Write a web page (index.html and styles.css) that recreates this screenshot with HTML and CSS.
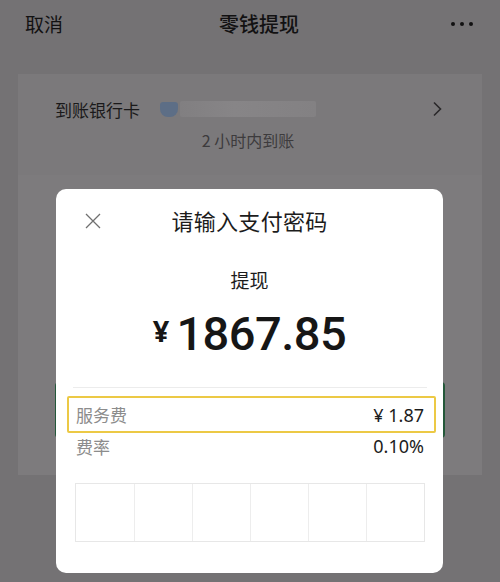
FILE: index.html
```html
<!DOCTYPE html>
<html lang="zh">
<head>
<meta charset="utf-8">
<link rel="stylesheet" href="styles.css">
</head>
<body>
<div class="screen">
  <div class="nav">
    <span class="nav-left">取消</span>
    <span class="nav-title">零钱提现</span>
    <span class="nav-more"><i></i><i></i><i></i></span>
  </div>
  <div class="card bank">
    <div class="bank-row">
      <span class="bank-label">到账银行卡</span>
      <span class="bank-name"><span class="bank-icon"></span><span class="blur"></span></span>
      <svg class="chev" width="11" height="16" viewBox="0 0 11 16"><path d="M2 1.5 L8.5 8 L2 14.5" fill="none" stroke="#2a292a" stroke-width="1.6"/></svg>
    </div>
    <div class="bank-sub">2 小时内到账</div>
  </div>
  <div class="card amount-card">
    <div class="green-btn"></div>
  </div>

  <div class="modal">
    <div class="modal-head">
      <svg class="close" width="16" height="16" viewBox="0 0 16 16"><path d="M1 1 L15 15 M15 1 L1 15" stroke="#707070" stroke-width="1.3" fill="none"/></svg>
      <span class="modal-title">请输入支付密码</span>
    </div>
    <div class="modal-sub">提现</div>
    <div class="modal-amount"><span class="yen">¥</span><span class="num">1867.85</span></div>
    <div class="divider"></div>
    <div class="fee-row highlight"><span class="k">服务费</span><span class="v">¥ 1.87</span></div>
    <div class="fee-row rate"><span class="k">费率</span><span class="v">0.10%</span></div>
    <div class="pwd">
      <div class="cell"></div><div class="cell"></div><div class="cell"></div>
      <div class="cell"></div><div class="cell"></div><div class="cell"></div>
    </div>
  </div>
</div>
</body>
</html>
```

FILE: styles.css
```css
* { box-sizing: border-box; }
html, body { margin: 0; padding: 0; }
body {
  font-family: "Noto Sans CJK SC", "Noto Sans", sans-serif;
  background: #747274;
}
.screen {
  position: relative;
  width: 500px;
  height: 582px;
  overflow: hidden;
  background: #747274;
}
.nav {
  height: 48px;
  padding: 0 27px 0 25px;
  display: flex;
  align-items: center;
  justify-content: space-between;
  color: #121112;
}
.nav-left { font-size: 19px; line-height: 26px; }
.nav-title { font-size: 20px; font-weight: 500; line-height: 26px; margin-left: 4px; }
.nav-more { display: flex; gap: 5px; }
.nav-more i { display: block; width: 4px; height: 4px; border-radius: 50%; background: #111; }

.card {
  margin: 0 18px;
  background: #7b797b;
}
.bank {
  margin-top: 26px;
  height: 101px;
  padding: 22px 39px 0 37px;
}
.bank-row {
  display: flex;
  align-items: center;
  height: 26px;
}
.bank-label { font-size: 17px; color: #1a191a; width: 105px; }
.bank-name { display: flex; align-items: center; flex: 1; }
.bank-icon {
  width: 18px; height: 15px;
  background: #5d6e86;
  border-radius: 3px 3px 8px 8px;
  margin-right: 2px;
}
.blur {
  width: 136px; height: 16px;
  background: linear-gradient(90deg, #817f81 0%, #878587 40%, #838183 100%);
  border-radius: 2px;
}
.chev { display: block; }
.bank-sub {
  margin-top: 6px;
  text-align: center;
  font-size: 16px;
  color: #3d3b3d;
  padding-right: 2px;
}
.amount-card {
  height: 300px;
  background: #7d7b7d;
  padding: 207px 0 0 37px;
}
.green-btn {
  width: 390px;
  height: 56px;
  background: #24583a;
  border-radius: 4px;
}

.modal {
  position: absolute;
  left: 56px;
  top: 189px;
  width: 387px;
  height: 384px;
  background: #ffffff;
  border-radius: 10px;
}
.modal-head {
  position: relative;
  height: 62px;
  text-align: center;
}
.close { position: absolute; left: 29px; top: 24px; }
.modal-title {
  font-size: 22px;
  line-height: 62px;
  color: #1c1c1c;
  letter-spacing: 0.3px;
}
.modal-sub {
  margin-top: 15px;
  text-align: center;
  font-size: 19px;
  line-height: 28px;
  color: #1c1c1c;
}
.modal-amount {
  margin-top: 11px;
  height: 56px;
  display: flex;
  align-items: center;
  justify-content: center;
  color: #161616;
}
.yen {
  font-family: "Noto Sans", sans-serif;
  font-weight: 700;
  font-size: 29px;
  margin-right: 7px;
  margin-top: -6px;
}
.num {
  font-family: Roboto, "Noto Sans", sans-serif;
  font-weight: 500;
  font-size: 47px;
  letter-spacing: -0.5px;
}
.divider {
  margin: 26px 16px 0 17px;
  height: 1px;
  background: #ececec;
}
.fee-row {
  display: flex;
  justify-content: space-between;
  align-items: center;
  font-size: 17px;
}
.fee-row .k { color: #8c8c8c; }
.fee-row .v { color: #1c1c1c; font-family: "Noto Sans", sans-serif; font-size: 18px; }
.highlight {
  margin: 8px 7px 0 11px;
  height: 37px;
  border: 2px solid #ecc945;
  border-radius: 2px;
  padding: 0 10px 0 7px;
}
.rate {
  margin: 0 19px 0 20px;
  height: 26px;
}
.pwd {
  margin: 24px 18px 0 19px;
  height: 59px;
  display: grid;
  grid-template-columns: repeat(6, 1fr);
  border: 1px solid #e7e7e7;
}
.cell { border-left: 1px solid #ededed; }
.cell:first-child { border-left: none; }
```
